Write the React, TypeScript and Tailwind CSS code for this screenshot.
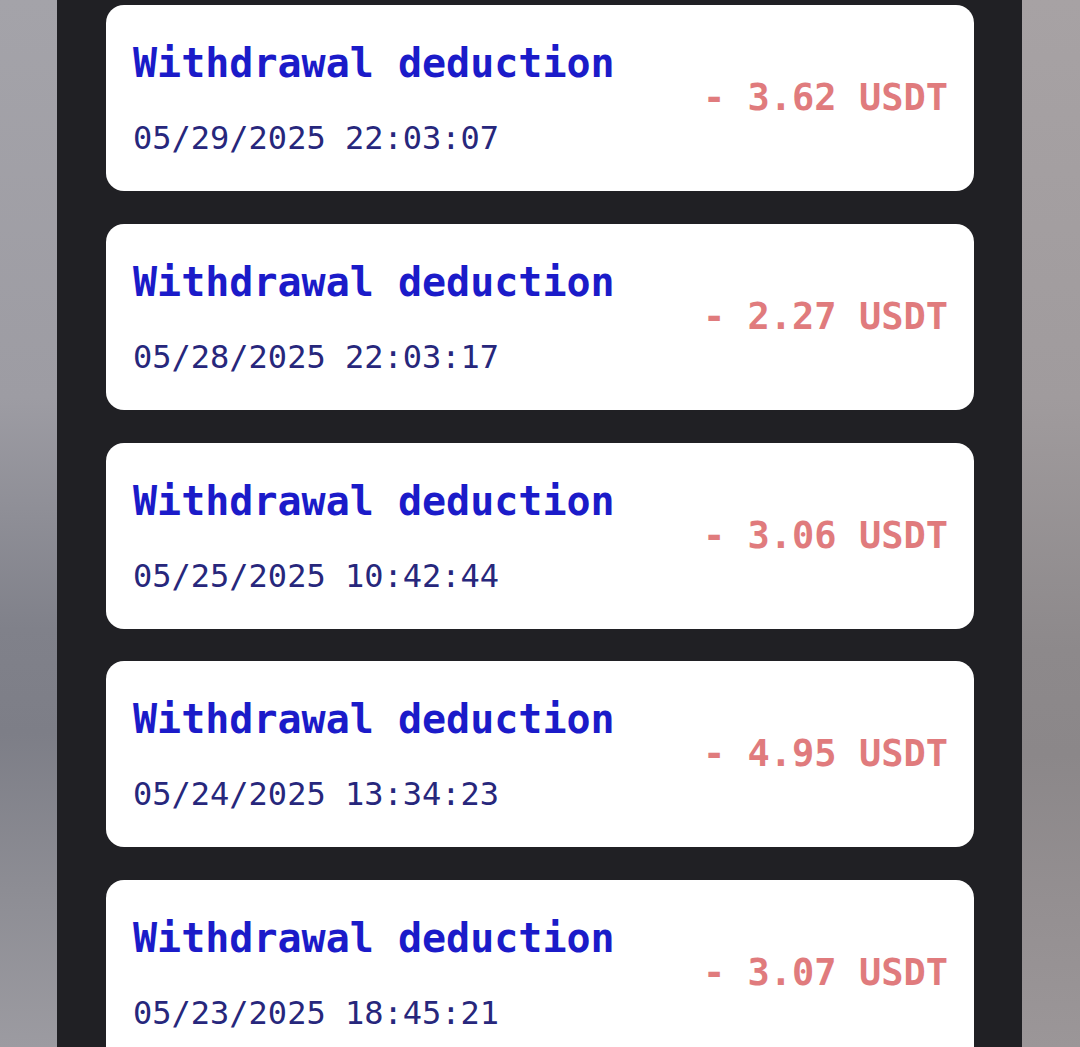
const ROWS = [
  { date: "05/29/2025 22:03:07", amount: "3.62" },
  { date: "05/28/2025 22:03:17", amount: "2.27" },
  { date: "05/25/2025 10:42:44", amount: "3.06" },
  { date: "05/24/2025 13:34:23", amount: "4.95" },
  { date: "05/23/2025 18:45:21", amount: "3.07" },
];

function Row({ date, amount }: { date: string; amount: string }) {
  return (
    <div className="shrink-0 h-[186px] rounded-[18px] bg-white pl-[27px] pr-[26px] flex items-center justify-between">
      <div className="flex flex-col pt-[1px]">
        <div className="text-[40px] leading-[48px] font-bold text-[#1b1bc9] whitespace-pre">
          Withdrawal deduction
        </div>
        <div className="mt-[31px] text-[32px] leading-[40px] text-[#27277c] whitespace-pre">
          {date}
        </div>
      </div>
      <div className="text-[37px] leading-[46px] font-bold text-[#e07b7d] whitespace-pre">
        - {amount} USDT
      </div>
    </div>
  );
}

export default function App() {
  return (
    <div className="flex h-[1047px] w-full overflow-hidden font-['DejaVu_Sans_Mono',monospace]">
      <div className="w-[57px] shrink-0 bg-[linear-gradient(to_bottom,#a4a3a9_0%,#9d9ca3_38%,#80818a_60%,#7d7e87_70%,#8d8d94_85%,#9c9ba1_100%)]" />
      <div className="w-[965px] shrink-0 bg-[#202024] pl-[49px] pr-[48px] pt-[5px] flex flex-col gap-[32.75px]">
        {ROWS.map((r, i) => (
          <Row key={i} date={r.date} amount={r.amount} />
        ))}
      </div>
      <div className="flex-1 bg-[linear-gradient(to_bottom,#a7a2a4_0%,#a09b9d_38%,#8d898b_62%,#8b8789_72%,#948f91_86%,#9b9698_100%)]" />
    </div>
  );
}
